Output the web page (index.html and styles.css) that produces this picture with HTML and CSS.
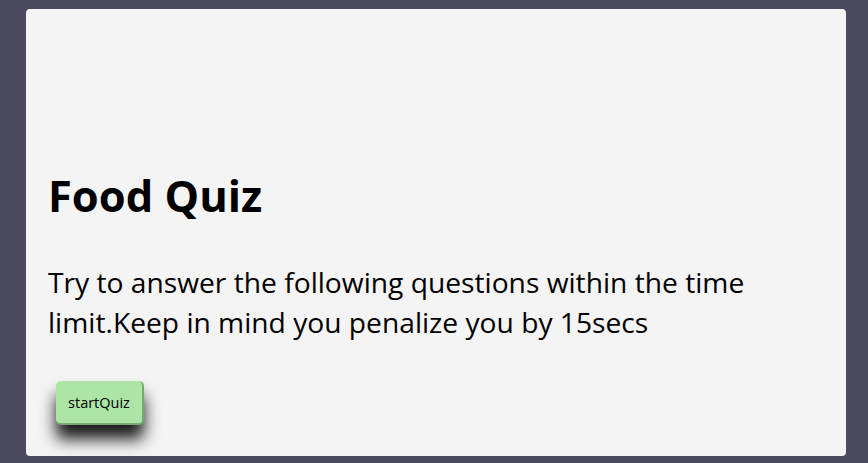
FILE: index.html
```html
<!DOCTYPE html>
<html>
<head>
<meta charset="utf-8">
<link rel="stylesheet" href="styles.css">
</head>
<body>
<main class="card">
  <h1 class="title">Food Quiz</h1>
  <p class="intro">Try to answer the following questions within the time limit.Keep in mind you penalize you by 15secs</p>
  <button class="start">startQuiz</button>
</main>
</body>
</html>
```
FILE: styles.css
```css
html, body {
  margin: 0;
  padding: 0;
}
body {
  background: #4a4a5e;
  font-family: "Open Sans", sans-serif;
  padding: 9px 22px 7px 26px;
  min-height: 463px;
  box-sizing: border-box;
}
.card {
  background: #f4f4f4;
  border-radius: 4px;
  height: 447px;
  box-sizing: border-box;
  padding: 159px 22px 0 22px;
  display: flex;
  flex-direction: column;
  align-items: flex-start;
}
.title {
  margin: 0;
  font-size: 43.5px;
  font-weight: 700;
  line-height: 56px;
  color: #000;
}
.intro {
  margin: 38px 0 0 0;
  font-size: 28.2px;
  line-height: 40px;
  color: #000;
}
.start {
  margin: 39px 0 0 8px;
  font-family: "Open Sans", sans-serif;
  font-size: 14.5px;
  background: #ade5a6;
  color: #000;
  border: none;
  border-right: 2px solid #7aa875;
  border-bottom: 2px solid #7aa875;
  border-radius: 5px;
  width: 88px;
  height: 44px;
  box-shadow: 0 14px 16px rgba(0,0,0,0.9);
}
```
